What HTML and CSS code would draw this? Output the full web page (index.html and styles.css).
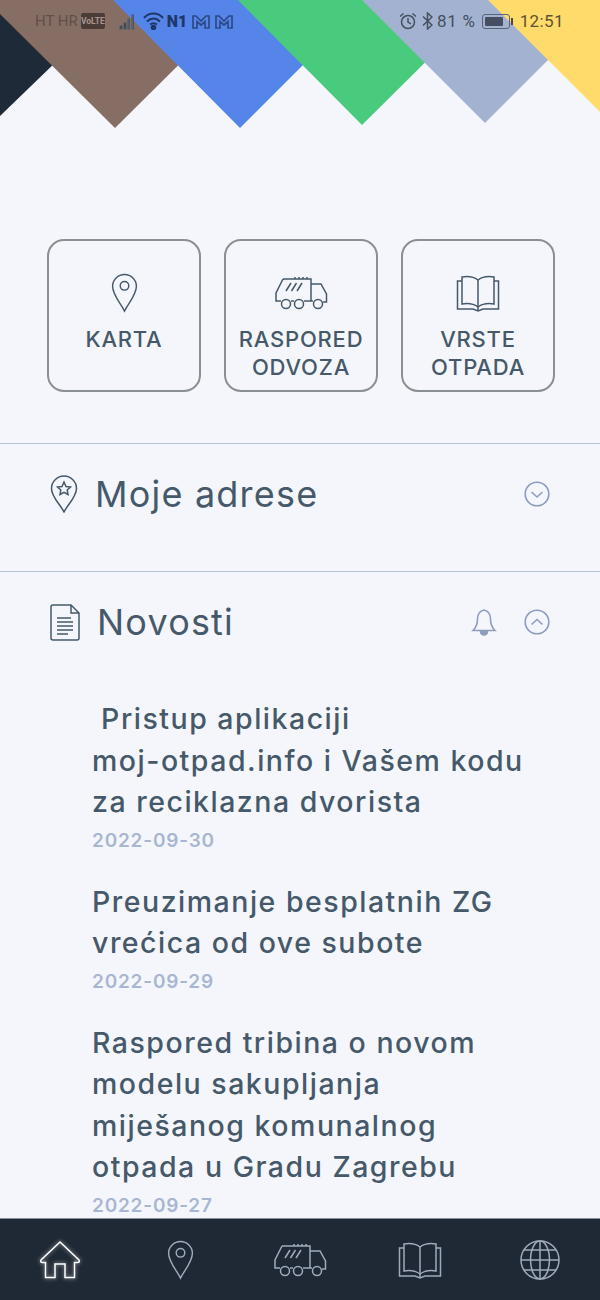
FILE: index.html
```html
<!DOCTYPE html>
<html>
<head>
    <title>Moj otpad</title>
    <link rel="stylesheet" href="styles.css">
</head>
<body>
    <svg class="defs" width="0" height="0">
        <symbol id="pin" viewBox="0 0 28 42">
            <path d="M14 40 C10 32 1.500 23 1.500 14 A12.500 12.500 0 0 1 26.500 14 C26.500 23 18 32 14 40 Z"/>
            <circle cx="14" cy="13.500" r="4.500"/>
        </symbol>
        <symbol id="truck" viewBox="0 0 53 34">
            <path d="M8 3 H36 V25 M8 3 L1 17 V25 H6 M16 25 H19 M29 25 H38 M36 8 H46 L51.500 18 V26 H48"/>
            <path d="M11 15 L16 7 M16.500 15 L21.500 7 M22 15 L27 7 M20 3 V1 M24 3 V1 M28 3 V1 M32 3 V1"/>
            <circle cx="11" cy="28" r="4.500"/>
            <circle cx="24" cy="28" r="4.500"/>
            <circle cx="43" cy="28" r="4.500"/>
        </symbol>
        <symbol id="book" viewBox="0 0 44 40">
            <path d="M22 7 C18 4 12 3 6 4 V31 C12 30 18 31 22 34 C26 31 32 30 38 31 V4 C32 3 26 4 22 7 Z"/>
            <path d="M22 7 V38"/>
            <path d="M6 8 H1.500 V36 H17 L22 38 L27 36 H42.500 V8 H38"/>
        </symbol>
    </svg>

    <header class="ribbons">
        <svg class="ribbons-art" viewBox="0 0 600 128" width="600" height="128">
            <polygon fill="#1f2a38" points="0,0 60,0 60,58 0,116"/>
            <polygon fill="#876e65" points="0,0 0,14 115,128 240,4 240,0"/>
            <polygon fill="#5585e8" points="113,0 240,128 368,0"/>
            <polygon fill="#48cb7d" points="238,0 362,125 488,0"/>
            <polygon fill="#a3b2d0" points="362,0 485,123 608,0"/>
            <polygon fill="#fedb6b" points="488,0 600,112 600,0"/>
        </svg>
        <div class="status">
            <div class="status-left">
                <span class="carrier">HT HR</span>
                <span class="volte">VoLTE</span>
                <svg class="signal" width="18" height="18" viewBox="0 0 18 18">
                    <rect x="1" y="14" width="2" height="3" fill="#3f3a3d"/>
                    <rect x="5" y="11" width="2" height="6" fill="#3f3a3d"/>
                    <rect x="9" y="7" width="1.500" height="10" fill="#6b5f60"/>
                    <rect x="13" y="3" width="1.500" height="14" fill="#7a6a66"/>
                </svg>
                <svg class="wifi" width="22" height="18" viewBox="0 0 22 18">
                    <path d="M1 6 C6 0 15 0 20 6 M4 9.500 C8 5.500 13 5.500 17 9.500 M7 12.500 C9 11 12 11 14 12.500"/>
                    <circle cx="10.500" cy="15.500" r="1.800"/>
                </svg>
                <span class="n1">N1</span>
                <svg class="mail" width="18" height="15" viewBox="0 0 18 15"><path d="M1 14 V2 H4 L9 7 L14 2 H17 V14 H13 V7.500 L9 11 L5 7.500 V14 Z"/></svg>
                <svg class="mail" width="18" height="15" viewBox="0 0 18 15"><path d="M1 14 V2 H4 L9 7 L14 2 H17 V14 H13 V7.500 L9 11 L5 7.500 V14 Z"/></svg>
            </div>
            <div class="status-right">
                <svg class="alarm" width="18" height="18" viewBox="0 0 18 18">
                    <circle cx="9" cy="10" r="6.500"/>
                    <path d="M9 6 V10 L12 12 M1 4.500 L4.500 1.500 M17 4.500 L13.500 1.500"/>
                </svg>
                <svg class="bt" width="11" height="18" viewBox="0 0 11 18"><path d="M1 4.500 L10 13 L5.500 17 V1 L10 5 L1 13.500"/></svg>
                <span class="battery-text">81 %</span>
                <span class="battery"><span class="battery-fill"></span></span>
                <span class="battery-cap"></span>
                <span class="clock">12:51</span>
            </div>
        </div>
    </header>

    <main class="content">
        <div class="cards">
            <a class="card">
                <span class="card-icon"><svg width="27" height="40"><use href="#pin"/></svg></span>
                <span class="card-label">KARTA</span>
            </a>
            <a class="card">
                <span class="card-icon"><svg width="53" height="34"><use href="#truck"/></svg></span>
                <span class="card-label">RASPORED ODVOZA</span>
            </a>
            <a class="card">
                <span class="card-icon"><svg width="44" height="40"><use href="#book"/></svg></span>
                <span class="card-label">VRSTE OTPADA</span>
            </a>
        </div>

        <section class="section">
            <div class="section-head">
                <svg class="section-icon" width="28" height="38" viewBox="0 0 28 38">
                    <path d="M14 37 C10 29 1.500 22 1.500 13.500 A12.500 12.500 0 0 1 26.500 13.500 C26.500 22 18 29 14 37 Z"/>
                    <path d="M14 7 L16 11.500 L20.500 12 L17.200 15 L18 19.500 L14 17.300 L10 19.500 L10.800 15 L7.500 12 L12 11.500 Z"/>
                </svg>
                <h2 class="section-title">Moje adrese</h2>
                <svg class="toggle" width="26" height="26" viewBox="0 0 26 26">
                    <circle cx="13" cy="13" r="11.800"/>
                    <path d="M7.500 11 L13 16 L18.500 11"/>
                </svg>
            </div>
        </section>

        <section class="section">
            <div class="section-head">
                <svg class="section-icon" width="30" height="37" viewBox="0 0 30 37">
                    <path d="M3 1 H21 L29 9 V34 Q29 36 27 36 H3 Q1 36 1 34 V3 Q1 1 3 1 Z M21 1 V9 H29"/>
                    <path d="M7 14 H21 M7 18 H23 M7 22 H23 M7 26 H23 M7 30 H18"/>
                </svg>
                <h2 class="section-title">Novosti</h2>
                <svg class="bell" width="26" height="28" viewBox="0 0 26 28">
                    <path d="M13 2 C8 3 6.500 7 6.500 11 C6.500 16 5.500 19 2 22.500 H24 C20.500 19 19.500 16 19.500 11 C19.500 7 18 3 13 2 Z"/>
                    <path class="bell-clapper" d="M9.500 23.500 H16.500 A3.500 3.500 0 0 1 9.500 23.500 Z"/>
                </svg>
                <svg class="toggle" width="26" height="26" viewBox="0 0 26 26">
                    <circle cx="13" cy="13" r="11.800"/>
                    <path d="M7.500 15.500 L13 10.500 L18.500 15.500"/>
                </svg>
            </div>
            <div class="news">
                <article class="news-item">
                    <h3 class="news-title">&nbsp;Pristup aplikaciji<br>moj-otpad.info i Vašem kodu<br>za reciklazna dvorista</h3>
                    <div class="news-date">2022-09-30</div>
                </article>
                <article class="news-item">
                    <h3 class="news-title">Preuzimanje besplatnih ZG<br>vrećica od ove subote</h3>
                    <div class="news-date">2022-09-29</div>
                </article>
                <article class="news-item">
                    <h3 class="news-title">Raspored tribina o novom<br>modelu sakupljanja<br>miješanog komunalnog<br>otpada u Gradu Zagrebu</h3>
                    <div class="news-date">2022-09-27</div>
                </article>
            </div>
        </section>
    </main>

    <nav class="tabbar">
        <a class="tab tab-active">
            <svg width="42" height="40" viewBox="0 0 42 40">
                <path d="M21 2 L40 20 Q41 22 39 22.500 H35.500 V37.500 H26 V24 H16 V37.500 H6.500 V22.500 H3 Q1 22 2 20 Z"/>
            </svg>
        </a>
        <a class="tab"><svg width="27" height="40"><use href="#pin"/></svg></a>
        <a class="tab"><svg width="53" height="34"><use href="#truck"/></svg></a>
        <a class="tab"><svg width="44" height="40"><use href="#book"/></svg></a>
        <a class="tab">
            <svg width="40" height="40" viewBox="0 0 40 40">
                <circle cx="20" cy="20" r="19"/>
                <ellipse cx="20" cy="20" rx="9.500" ry="19"/>
                <path d="M20 1 V39 M1 20 H39 M4 10 H36 M4 30 H36"/>
            </svg>
        </a>
    </nav>
</body>
</html>
```

FILE: styles.css
```css
* {
    box-sizing: border-box;
}

body {
    margin: 0;
    width: 600px;
    height: 1300px;
    overflow: hidden;
    display: flex;
    flex-direction: column;
    background: #f4f6fb;
    color: #46596a;
    font-family: Inter, "Open Sans", sans-serif;
}

svg {
    display: block;
    fill: none;
    stroke: currentColor;
}

.defs {
    position: absolute;
}

/* header */
.ribbons {
    position: relative;
    height: 128px;
    flex: none;
}

.ribbons-art {
    stroke: none;
}

.status {
    position: absolute;
    top: 12px;
    left: 35px;
    right: 36px;
    height: 18px;
    display: flex;
    justify-content: space-between;
    align-items: center;
    font-family: Roboto, sans-serif;
    font-size: 15px;
}

.status-left,
.status-right {
    display: flex;
    align-items: center;
}

.carrier {
    font-size: 15px;
    color: #5f4e49;
}

.volte {
    margin-left: 3px;
    width: 24px;
    height: 16px;
    line-height: 16px;
    border-radius: 2px;
    background: #4c3c38;
    color: #a8958d;
    font-size: 8.500px;
    font-weight: 700;
    text-align: center;
}

.signal {
    margin-left: 14px;
}

.wifi {
    margin-left: 6px;
    color: #1f3768;
    stroke-width: 2;
}

.wifi circle {
    fill: currentColor;
}

.n1 {
    margin: 0 5px 0 2px;
    color: #1f3768;
    font-size: 16px;
    font-weight: 900;
}

.mail {
    margin-right: 5px;
    color: #2c4a88;
    stroke-width: 1.700;
}

.status-right {
    color: #45505f;
}

.alarm,
.bt {
    stroke-width: 1.500;
}

.bt {
    margin: 0 4px 0 5px;
}

.battery-text {
    font-size: 17px;
    letter-spacing: 0.700px;
}

.alarm {
    margin-left: -3px;
}

.battery {
    margin-left: 6px;
    width: 28px;
    height: 15px;
    padding: 2px;
    border: 1px solid #5c6478;
    border-radius: 3px;
}

.battery-fill {
    display: block;
    width: 84%;
    height: 100%;
    border-radius: 1px;
    background: #474e62;
}

.battery-cap {
    margin-left: 1px;
    width: 2px;
    height: 7px;
    background: #4a4a4a;
}

.clock {
    margin-left: 7px;
    font-size: 17px;
    letter-spacing: 0.400px;
    color: #5d5230;
}

/* quick links */
.content {
    flex: 1;
    min-height: 0;
    overflow: hidden;
}

.cards {
    margin-top: 111px;
    padding: 0 45px 0 47px;
    display: grid;
    grid-template-columns: repeat(3, 154px);
    justify-content: space-between;
}

.card {
    height: 153px;
    padding-top: 30px;
    display: flex;
    flex-direction: column;
    align-items: center;
    border: 2px solid #8a8e95;
    border-radius: 17px;
    text-align: center;
}

.card-icon {
    height: 44px;
    display: flex;
    align-items: center;
}

.card-icon svg {
    stroke-width: 1.500;
}

.card-label {
    margin-top: 10px;
    width: 140px;
    font-size: 22px;
    font-weight: 500;
    letter-spacing: 0.800px;
    line-height: 28px;
}

/* accordion sections */
.section {
    border-top: 1px solid #b3c6d6;
}

.section:first-of-type {
    margin-top: 51px;
    height: 128px;
}

.section-head {
    height: 100px;
    padding: 0 50px;
    display: flex;
    align-items: center;
}

.section-icon {
    stroke-width: 1.500;
}

.section-title {
    flex: 1;
    margin: 0 0 0 17px;
    font-size: 36px;
    font-weight: 400;
    letter-spacing: 1.200px;
}

.toggle,
.bell {
    color: #8e9dbd;
    stroke-width: 1.600;
}

.bell {
    margin-right: 27px;
}

.bell-clapper {
    fill: currentColor;
}

/* news */
.news {
    padding: 26px 20px 0 92px;
}

.news-item {
    margin-bottom: 23px;
}

.news-title {
    margin: 0;
    font-size: 28.500px;
    font-weight: 500;
    letter-spacing: 1.500px;
    line-height: 41.500px;
}

.news-date {
    margin-top: 1px;
    font-size: 19px;
    font-weight: 600;
    letter-spacing: 0.800px;
    line-height: 34px;
    color: #a9b6d1;
}

/* bottom tabs */
.tabbar {
    height: 82px;
    flex: none;
    display: flex;
    background: #1f2935;
    border-top: 1px solid #8a929c;
}

.tab {
    flex: 1;
    display: flex;
    justify-content: center;
    align-items: center;
    color: #a0aabd;
}

.tab svg {
    stroke-width: 1.500;
}

.tab-active {
    color: #fff;
}

.tab-active svg {
    filter: drop-shadow(0 0 2px rgba(255, 255, 255, 0.7));
}
```
